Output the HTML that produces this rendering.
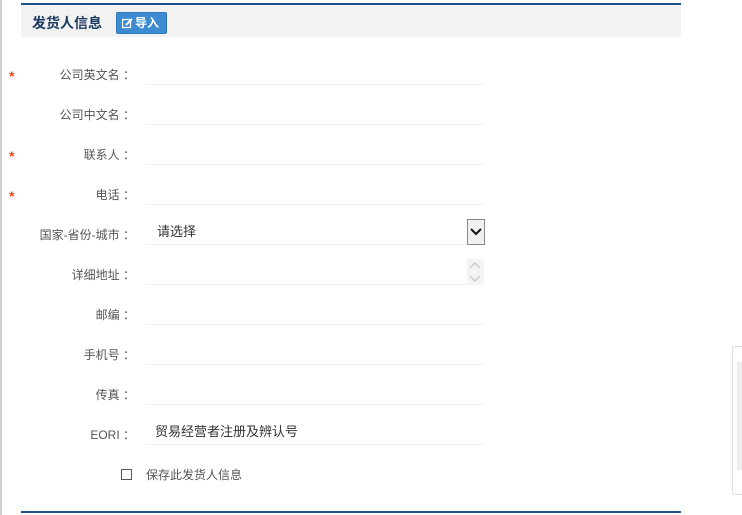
<!DOCTYPE html>
<html><head><meta charset="utf-8"><style>
body{margin:0;width:742px;height:515px;background:#fff;position:relative;overflow:hidden;font-family:"Liberation Sans","Noto Sans CJK SC",sans-serif;}
.lb{position:absolute;left:0;top:0;width:2px;height:515px;background:#d0d0d0}
.hd{position:absolute;left:21px;top:3px;width:660px;height:34px;background:#f2f2f2;border-top:2px solid #1f5189;box-sizing:border-box}
.hd .t{position:absolute;left:11px;top:8px;font-size:14px;font-weight:bold;color:#1e3b60}
.btn{position:absolute;left:95px;top:7px;width:51px;height:22px;background:#3d8bd0;border:1px solid #2e77b8;box-sizing:border-box;border-radius:2px;color:#fff;font-size:12px;font-weight:bold;line-height:20px;padding-left:18px}
.btn svg{position:absolute;left:5px;top:5px}
.bot{position:absolute;left:21px;top:511px;width:660px;height:2px;background:#1f5189}
.row{position:absolute;left:0;width:490px;height:40px}
.lab{position:absolute;right:355px;top:0;font-size:12px;color:#555;white-space:nowrap}
.star{position:absolute;left:9px;top:2px;color:#f04a1a;font-size:14px;font-weight:bold}
.inp{position:absolute;left:147px;width:337px;top:-7px;height:26px;border-bottom:1px solid #eee;font-size:13px;color:#333;line-height:26px;padding-left:10px;box-sizing:border-box}
.side{position:absolute;left:732px;top:346px;width:20px;height:149px;border:1px solid #ddd;border-radius:3px;box-sizing:border-box}
.side div{position:absolute;left:4px;top:15px;width:20px;height:108px;background:#eee}
</style></head><body>
<div class="lb"></div>
<div class="hd"><span class="t">发货人信息</span><div class="btn"><svg width="11" height="11" viewBox="0 0 11 11"><rect x="0.5" y="1.5" width="8" height="8" fill="none" stroke="#fff" stroke-width="1.3"/><path d="M4 7 L10 1" stroke="#fff" stroke-width="2"/></svg>导入</div></div>
<div class="row" style="top:66px"><span class="star">*</span><span class="lab">公司英文名 ：</span><div class="inp"></div></div>
<div class="row" style="top:106px"><span class="lab">公司中文名 ：</span><div class="inp"></div></div>
<div class="row" style="top:146px"><span class="star">*</span><span class="lab">联系人 ：</span><div class="inp"></div></div>
<div class="row" style="top:186px"><span class="star">*</span><span class="lab">电话 ：</span><div class="inp"></div></div>
<div class="row" style="top:226px"><span class="lab">国家-省份-城市 ：</span><div class="inp">请选择<div style="position:absolute;left:320px;top:0;width:18px;height:26px;border:1px solid #888;background:#f0f0f0;box-sizing:border-box"><svg width="16" height="24" viewBox="0 0 16 24"><path d="M3 9 L8 14 L13 9" fill="none" stroke="#111" stroke-width="2"/></svg></div></div></div>
<div class="row" style="top:266px"><span class="lab">详细地址 ：</span><div class="inp"><div style="position:absolute;left:320px;top:0;width:17px;height:26px;background:#f4f4f4"><svg width="17" height="26" viewBox="0 0 17 26"><path d="M3 9 L8 4 L13 9 M3 17 L8 22 L13 17" fill="none" stroke="#ccc" stroke-width="1.5"/></svg></div></div></div>
<div class="row" style="top:306px"><span class="lab">邮编 ：</span><div class="inp"></div></div>
<div class="row" style="top:346px"><span class="lab">手机号 ：</span><div class="inp"></div></div>
<div class="row" style="top:386px"><span class="lab">传真 ：</span><div class="inp"></div></div>
<div class="row" style="top:426px"><span class="lab">EORI ：</span><div class="inp" style="padding-left:8px">贸易经营者注册及辨认号</div></div>
<div style="position:absolute;left:121px;top:469px;width:11px;height:11px;border:1px solid #555;box-sizing:border-box"></div>
<div style="position:absolute;left:146px;top:466px;font-size:12px;color:#555">保存此发货人信息</div>
<div class="bot"></div>
<div class="side"><div></div></div>
</body></html>
